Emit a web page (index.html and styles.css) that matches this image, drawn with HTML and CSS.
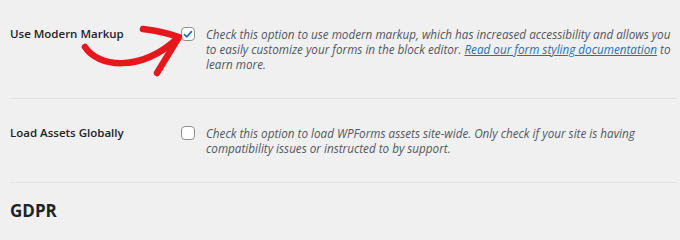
FILE: index.html
```html
<!DOCTYPE html>
<html lang="en">
<head>
<meta charset="utf-8">
<title>WPForms Settings</title>
<link rel="stylesheet" href="styles.css">
</head>
<body>
<div class="page">
  <div class="row">
    <div class="label">Use Modern Markup</div>
    <div class="field">
      <span class="checkbox checked">
        <svg viewBox="0 0 16 16" width="13" height="13"><path d="M3.2 8.2 L6.4 11.2 L12.6 4.2" fill="none" stroke="#2271b1" stroke-width="2.3" stroke-linecap="round" stroke-linejoin="round"/></svg>
      </span>
      <p class="desc">Check this option to use modern markup, which has increased accessibility and allows you to easily customize your forms in the block editor. <a href="#">Read our form styling documentation</a> to learn more.</p>
    </div>
    <svg class="arrow" viewBox="0 0 200 90" width="200" height="90">
      <path d="M85 47 C 98 67, 140 73, 178 38" fill="none" stroke="#e5191d" stroke-width="6.5" stroke-linecap="round"/>
      <path d="M143 29 Q 161 31, 179 37 L 157 73" fill="none" stroke="#e5191d" stroke-width="6.5" stroke-linecap="round" stroke-linejoin="round"/>
    </svg>
  </div>
  <div class="row">
    <div class="label">Load Assets Globally</div>
    <div class="field">
      <span class="checkbox"></span>
      <p class="desc">Check this option to load WPForms assets site-wide. Only check if your site is having compatibility issues or instructed to by support.</p>
    </div>
  </div>
  <h2 class="section">GDPR</h2>
</div>
</body>
</html>
```
FILE: styles.css
```css
html, body {
  margin: 0;
  padding: 0;
  background: #f0f0f1;
}
body {
  font-family: "Open Sans", "Noto Sans", sans-serif;
  color: #1d2327;
}
.page {
  padding: 0 3px 0 10px;
  position: relative;
}
.row {
  position: relative;
  display: grid;
  grid-template-columns: 171px 1fr;
  padding: 27px 0 26px;
  border-bottom: 1px solid #e1e1e3;
}
.label {
  font-size: 11.5px;
  font-weight: 600;
  line-height: 15px;
  margin-top: -1px;
}
.field {
  display: flex;
  align-items: flex-start;
  gap: 11px;
}
.checkbox {
  flex: none;
  width: 12px;
  height: 12px;
  border: 1px solid #8c8f94;
  border-radius: 4px;
  background: #fff;
  margin-top: 0;
  display: flex;
  align-items: center;
  justify-content: center;
}
.desc {
  margin: 0;
  font-size: 11.7px;
  font-style: italic;
  line-height: 15px;
  color: #50575e;
}
.desc a {
  color: #2271b1;
  text-decoration: underline;
}
.arrow {
  position: absolute;
  left: -10px;
  top: 0;
  pointer-events: none;
}
.section {
  margin: 18px 0 0;
  font-size: 17px;
  font-weight: 700;
  line-height: 20px;
  color: #1d2327;
}
```
